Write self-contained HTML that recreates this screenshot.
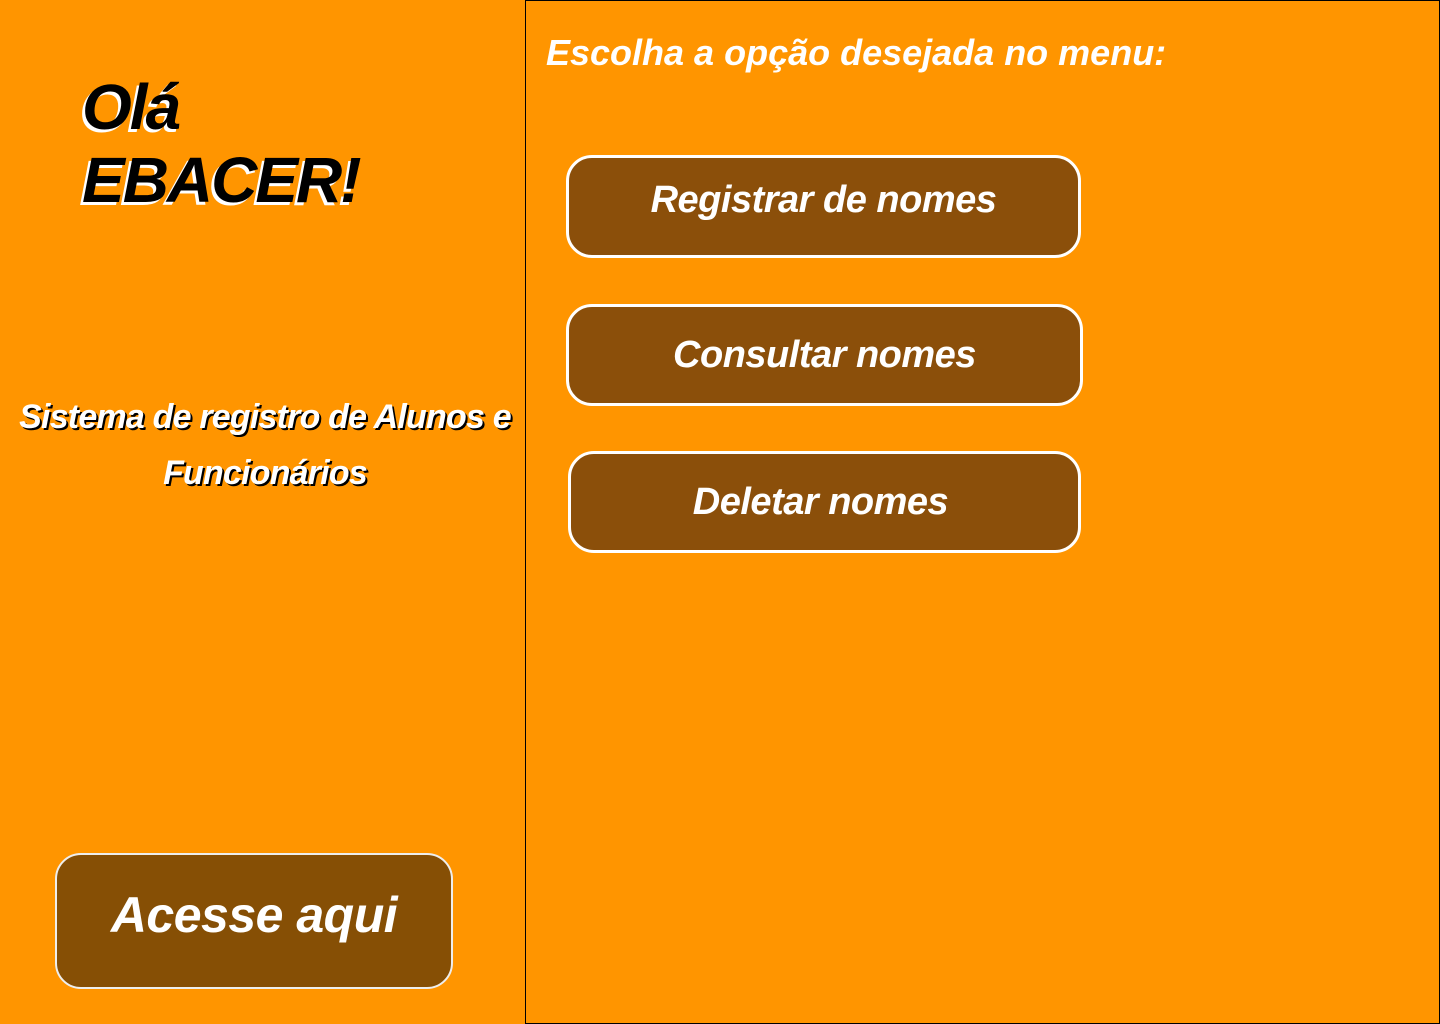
<!DOCTYPE html>
<html><head><meta charset="utf-8"><style>
*{margin:0;padding:0;box-sizing:border-box}
body{width:1440px;height:1024px;background:#FF9500;position:relative;overflow:hidden;font-family:"Liberation Sans",sans-serif;font-weight:bold;font-style:italic}
.panel{position:absolute;left:525px;top:0;width:915px;height:1024px;border:1px solid #000}
.t{position:absolute;white-space:nowrap}
.hello{left:82px;font-size:64px;color:#000;letter-spacing:-2px;text-shadow:-3px 3px 0 #fff;line-height:1}
.sub{left:0;width:530px;text-align:center;font-size:34px;color:#fff;letter-spacing:-0.8px;text-shadow:2px 2px 0 #000;line-height:1}
.btn{position:absolute;background:#8B4F0A;border:3px solid #fff;border-radius:26px;color:#fff;display:flex;align-items:center;justify-content:center;font-size:38px;letter-spacing:-0.5px}
</style></head><body>
<div class="panel"></div>
<div class="t hello" style="top:75px">Olá</div>
<div class="t hello" style="top:148px">EBACER!</div>
<div class="t sub" style="top:400px">Sistema de registro de Alunos e</div>
<div class="t sub" style="top:456px">Funcionários</div>
<div class="btn" style="left:55px;top:853px;width:398px;height:136px;background:#864F05;border:2px solid #eee;font-size:50px;padding-bottom:12px">Acesse aqui</div>
<div class="t" style="left:546px;top:32px;font-size:36px;color:#fff;letter-spacing:0px">Escolha a opção desejada no menu:</div>
<div class="btn" style="left:566px;top:155px;width:515px;height:103px;padding-bottom:12px">Registrar de nomes</div>
<div class="btn" style="left:566px;top:304px;width:517px;height:102px;padding-bottom:0px">Consultar nomes</div>
<div class="btn" style="left:568px;top:451px;width:513px;height:102px;padding-bottom:0px;padding-right:8px">Deletar nomes</div>
</body></html>
